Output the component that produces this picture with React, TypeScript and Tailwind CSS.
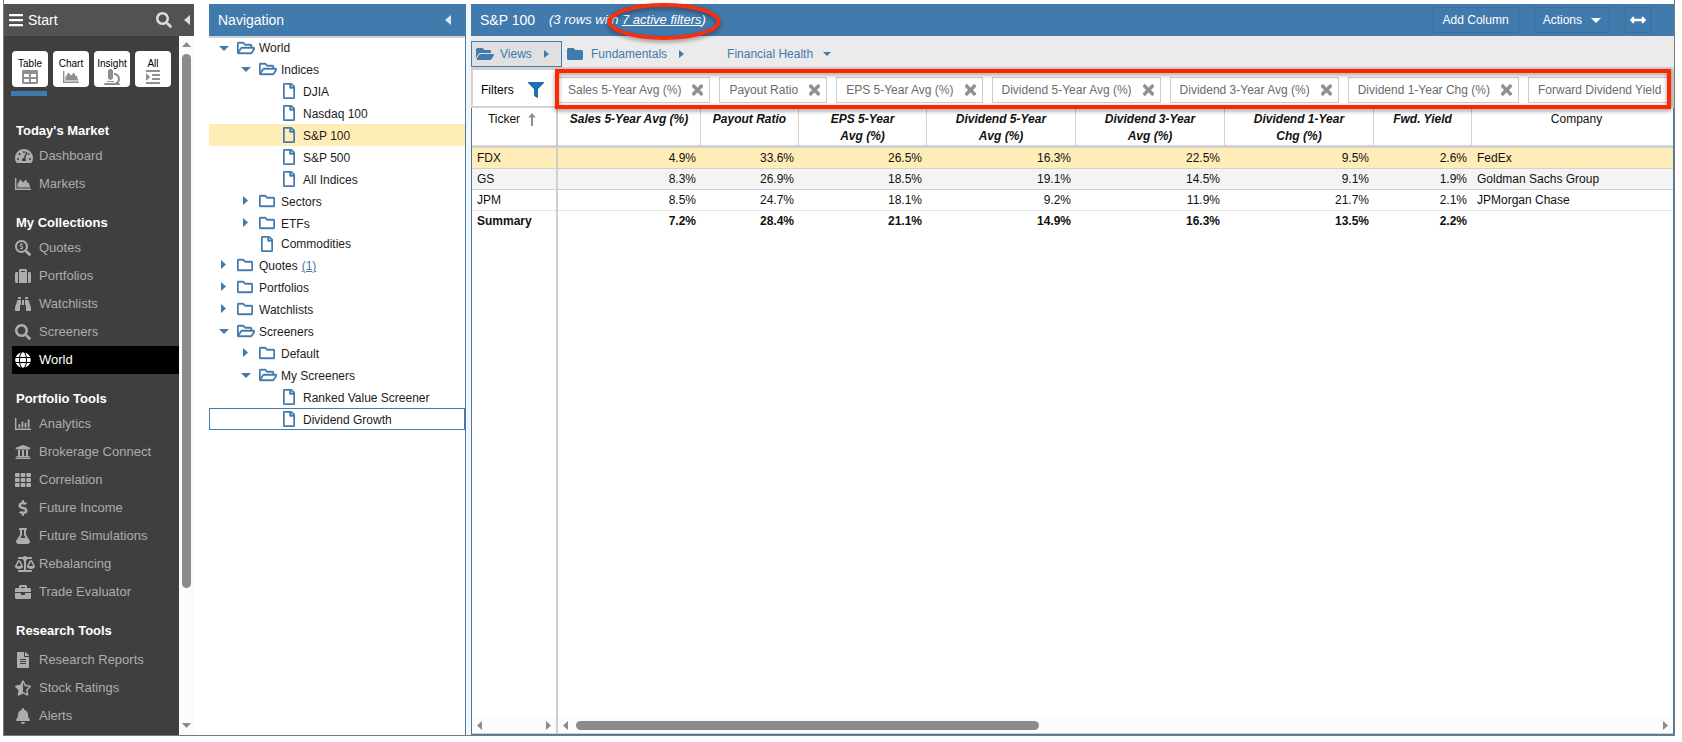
import type { ReactNode } from "react";
import { clsx } from "clsx";
import type { IconType } from "react-icons";
import {
  FaArrowsAltH,
  FaBalanceScale,
  FaBars,
  FaBell,
  FaBinoculars,
  FaBriefcase,
  FaDollarSign,
  FaFileAlt,
  FaFilter,
  FaFlask,
  FaFolder,
  FaFolderOpen,
  FaGlobe,
  FaIndent,
  FaMicroscope,
  FaRegFile,
  FaRegFolder,
  FaRegFolderOpen,
  FaSearch,
  FaSearchDollar,
  FaStarHalfAlt,
  FaSuitcase,
  FaTachometerAlt,
  FaTh,
  FaTimes,
  FaUniversity,
} from "react-icons/fa";

type IconProps = { className?: string };
type AnyIcon = IconType | ((props: IconProps) => ReactNode);

function AreaChartIcon({ className }: IconProps) {
  return (
    <svg viewBox="0 0 16 16" fill="currentColor" className={className}>
      <path d="M0 2h1.4v10.6H16V14H0zM2.4 11.6V8l3-4.4 2.8 2.8 2.8-2.8 1.8 3.6.9-.7 1.6 5.1z" />
    </svg>
  );
}

function BarChartIcon({ className }: IconProps) {
  return (
    <svg viewBox="0 0 16 16" fill="currentColor" className={className}>
      <path d="M0 2h1.4v10.6H16V14H0zM3.4 8.2h1.8v3.3H3.4zM6.5 5.4h1.8v6.1H6.5zM9.6 6.8h1.8v4.7H9.6zM12.7 3.6h1.8v7.9h-1.8z" />
    </svg>
  );
}

function TableIcon({ className }: IconProps) {
  return (
    <svg viewBox="0 0 16 14" className={className}>
      <path
        fill="currentColor"
        fillRule="evenodd"
        d="M1.4 0h13.2A1.4 1.4 0 0 1 16 1.4v11.2a1.4 1.4 0 0 1-1.4 1.4H1.4A1.4 1.4 0 0 1 0 12.6V1.4A1.4 1.4 0 0 1 1.4 0zM2 4v3h5V4zm7 0v3h5V4zM2 9v3h5V9zm7 0v3h5V9z"
      />
    </svg>
  );
}

function SortArrowIcon({ className }: IconProps) {
  return (
    <svg viewBox="0 0 8 14" fill="currentColor" className={className}>
      <path d="M4 0l3.8 4.4H5V13H3V4.4H.2z" />
    </svg>
  );
}

function Triangle({ dir, className }: { dir: "left" | "right" | "down" | "up"; className?: string }) {
  const points = {
    left: "10,0 10,10 0,5",
    right: "0,0 10,5 0,10",
    down: "0,0 10,0 5,10",
    up: "0,10 5,0 10,10",
  }[dir];
  return (
    <svg viewBox="0 0 10 10" preserveAspectRatio="none" fill="currentColor" className={clsx("shrink-0", className)}>
      <polygon points={points} />
    </svg>
  );
}

const tiles: { label: string; icon: AnyIcon }[] = [
  { label: "Table", icon: TableIcon },
  { label: "Chart", icon: AreaChartIcon },
  { label: "Insight", icon: FaMicroscope },
  { label: "All", icon: FaIndent },
];

type MenuItem = { label: string; icon: AnyIcon; size?: string; active?: boolean };

const menu: { title: string; spaced?: boolean; items: MenuItem[] }[] = [
  {
    title: "Today's Market",
    items: [
      { label: "Dashboard", icon: FaTachometerAlt, size: "h-4 w-[18px]" },
      { label: "Markets", icon: AreaChartIcon },
    ],
  },
  {
    title: "My Collections",
    items: [
      { label: "Quotes", icon: FaSearchDollar },
      { label: "Portfolios", icon: FaSuitcase },
      { label: "Watchlists", icon: FaBinoculars },
      { label: "Screeners", icon: FaSearch },
      { label: "World", icon: FaGlobe, active: true },
    ],
  },
  {
    title: "Portfolio Tools",
    items: [
      { label: "Analytics", icon: BarChartIcon },
      { label: "Brokerage Connect", icon: FaUniversity },
      { label: "Correlation", icon: FaTh },
      { label: "Future Income", icon: FaDollarSign },
      { label: "Future Simulations", icon: FaFlask },
      { label: "Rebalancing", icon: FaBalanceScale, size: "h-4 w-5" },
      { label: "Trade Evaluator", icon: FaBriefcase },
    ],
  },
  {
    title: "Research Tools",
    spaced: true,
    items: [
      { label: "Research Reports", icon: FaFileAlt },
      { label: "Stock Ratings", icon: FaStarHalfAlt },
      { label: "Alerts", icon: FaBell },
    ],
  },
];

function Sidebar() {
  return (
    <aside className="flex w-[190px] shrink-0 flex-col bg-[#3f3f3f]">
      <div className="flex h-8 shrink-0 items-center bg-[#525252] pr-1 pl-1 text-white">
        <button type="button" aria-label="Menu">
          <FaBars className="size-4" />
        </button>
        <span className="ml-1 flex-1 text-[14px]">Start</span>
        <button type="button" aria-label="Search">
          <FaSearch className="size-4 text-[#dcdcdc]" />
        </button>
        <button type="button" aria-label="Collapse menu" className="ml-3">
          <Triangle dir="left" className="h-2.5 w-1.5 text-[#dcdcdc]" />
        </button>
      </div>
      <div className="flex min-h-0 flex-1">
        <div className="min-w-0 flex-1 overflow-hidden pt-[15px]">
          <div className="flex gap-[5px] pl-2">
            {tiles.map(({ label, icon: Icon }) => (
              <button
                key={label}
                type="button"
                className="flex h-9 w-9 flex-col items-center rounded bg-white pt-[7px] text-[10px] leading-[11px] text-black"
              >
                {label}
                <Icon className={clsx("shrink-0 text-[#8f8f8f]", label === "Table" ? "mt-px h-3.5 w-4" : "size-4")} />
              </button>
            ))}
          </div>
          <div className="mt-1 mb-[10px] ml-[7px] h-[5px] w-9 bg-[#417aad]" />
          {menu.map((group) => (
            <section key={group.title}>
              <h2 className={clsx("pt-4 pl-3 text-[13px] leading-[17px] font-bold text-white", group.spaced ? "h-10" : "h-9")}>
                {group.title}
              </h2>
              <ul>
                {group.items.map(({ label, icon: Icon, size, active }) => (
                  <li key={label}>
                    <a
                      href="#"
                      className={clsx(
                        "ml-2 flex h-7 items-center pl-[3px] text-[13px]",
                        active ? "bg-black text-white" : "text-[#adadad]"
                      )}
                    >
                      <span className="w-6 shrink-0">
                        <Icon className={clsx("shrink-0", size ?? "size-4")} />
                      </span>
                      {label}
                    </a>
                  </li>
                ))}
              </ul>
            </section>
          ))}
        </div>
        <div className="flex w-[15px] flex-col items-center bg-[#fcfcfc] pt-1.5 pb-[7px] text-[#8b8b8b]">
          <Triangle dir="up" className="h-[5px] w-[9px]" />
          <div className="mt-[7px] w-[9px] flex-[533] rounded-full bg-[#8b8b8b]" />
          <div className="flex-[135]" />
          <Triangle dir="down" className="h-[5px] w-[9px]" />
        </div>
      </div>
    </aside>
  );
}

type TreeRow = {
  label: string;
  level: number;
  kind: "open" | "closed" | "file";
  count?: string;
  selected?: boolean;
  focused?: boolean;
  short?: boolean;
};

const tree: TreeRow[] = [
  { label: "World", level: 0, kind: "open", short: true },
  { label: "Indices", level: 1, kind: "open" },
  { label: "DJIA", level: 2, kind: "file" },
  { label: "Nasdaq 100", level: 2, kind: "file" },
  { label: "S&P 100", level: 2, kind: "file", selected: true },
  { label: "S&P 500", level: 2, kind: "file" },
  { label: "All Indices", level: 2, kind: "file" },
  { label: "Sectors", level: 1, kind: "closed" },
  { label: "ETFs", level: 1, kind: "closed" },
  { label: "Commodities", level: 1, kind: "file", short: true },
  { label: "Quotes", level: 0, kind: "closed", count: "(1)" },
  { label: "Portfolios", level: 0, kind: "closed" },
  { label: "Watchlists", level: 0, kind: "closed" },
  { label: "Screeners", level: 0, kind: "open" },
  { label: "Default", level: 1, kind: "closed" },
  { label: "My Screeners", level: 1, kind: "open" },
  { label: "Ranked Value Screener", level: 2, kind: "file" },
  { label: "Dividend Growth", level: 2, kind: "file", focused: true },
];

const indents = ["pl-[9px]", "pl-[31px]", "pl-[53px]"];

function Navigation() {
  return (
    <nav className="flex w-[257px] shrink-0 flex-col border-r border-[#417aad] bg-white">
      <div className="flex h-8 items-center justify-between bg-[#417aad] pr-3.5 pl-[9px] text-white">
        <h2 className="text-[14px]">Navigation</h2>
        <button type="button" aria-label="Collapse navigation">
          <Triangle dir="left" className="h-2.5 w-1.5 text-[#dde8f2]" />
        </button>
      </div>
      <ul className="border-t-2 border-[#d2d2d2] text-[12px] text-[#1c1c1c]">
        {tree.map((row) => (
          <li
            key={row.label}
            className={clsx(
              "flex items-center border",
              row.short ? "h-5" : "h-[22px]",
              indents[row.level],
              row.selected ? "bg-[#ffedb8]" : "bg-white",
              row.focused ? "border-[#417aad]" : "border-transparent"
            )}
          >
            <span className="flex w-[18px] text-[#417aad]">
              {row.kind === "open" && <Triangle dir="down" className="h-[5px] w-2.5" />}
              {row.kind === "closed" && <Triangle dir="right" className="mb-0.5 ml-0.5 h-[9px] w-[5px]" />}
            </span>
            <span className="flex w-[22px] text-[#417aad]">
              {row.kind === "open" && <FaRegFolderOpen className="size-[18px] stroke-[#417aad] stroke-[14]" />}
              {row.kind === "closed" && <FaRegFolder className="size-4 stroke-[#417aad] stroke-[14]" />}
              {row.kind === "file" && <FaRegFile className="ml-0.5 h-4 w-3 stroke-[#417aad] stroke-[14]" />}
            </span>
            <span className={clsx(!row.short && "pt-0.5")}>
              {row.label}
              {row.count && (
                <a href="#" className="ml-1 text-[#417aad] underline">
                  {row.count}
                </a>
              )}
            </span>
          </li>
        ))}
      </ul>
    </nav>
  );
}

function TitleBar() {
  return (
    <header className="flex h-8 shrink-0 items-center bg-[#417aad] pr-[23px] pl-[9px] text-white">
      <h1 className="text-[14px]">S&amp;P 100</h1>
      <p className="ml-3.5 flex-1 text-[13px] italic">
        (3 rows with{" "}
        <span className="relative">
          <a href="#" className="underline">
            7 active filters
          </a>
          <svg
            viewBox="0 0 116 40"
            fill="none"
            className="pointer-events-none absolute -top-[10px] -left-4 z-10 h-10 w-[116px] max-w-none drop-shadow-[0_2px_2px_rgba(0,0,0,0.4)]"
          >
            <ellipse cx="58" cy="19.5" rx="54.5" ry="16.5" stroke="#f4300e" strokeWidth="4" />
          </svg>
        </span>
        )
      </p>
      <div className="flex gap-[15px] text-[12px]">
        <button type="button" className="h-[26px] border border-[#3a6fa0] px-[9px]">
          Add Column
        </button>
        <button type="button" className="flex h-[26px] items-center gap-[9px] border border-[#3a6fa0] px-2">
          Actions
          <Triangle dir="down" className="h-[5px] w-2.5" />
        </button>
        <button type="button" aria-label="Fit width" className="flex h-[26px] w-[26px] items-center justify-center border border-[#3a6fa0]">
          <FaArrowsAltH className="size-4" />
        </button>
      </div>
    </header>
  );
}

function ViewsBar() {
  return (
    <div className="flex h-[31px] shrink-0 items-end bg-[#ebebeb] text-[12px] text-[#417aad]">
      <button type="button" className="flex h-[26px] w-[91px] items-center border border-[#417aad] bg-[#e0e0e0] pl-1">
        <FaFolderOpen className="mr-1.5 size-[18px]" />
        Views
        <Triangle dir="right" className="ml-3 h-2 w-[5px]" />
      </button>
      <button type="button" className="ml-[5px] flex h-[26px] items-center">
        <FaFolder className="mr-2 size-4" />
        Fundamentals
        <Triangle dir="right" className="ml-3 h-2 w-[5px]" />
      </button>
      <button type="button" className="ml-[43px] flex h-[26px] items-center">
        Financial Health
        <Triangle dir="down" className="ml-2.5 h-1 w-2" />
      </button>
    </div>
  );
}

const filters = [
  "Sales 5-Year Avg (%)",
  "Payout Ratio",
  "EPS 5-Year Avg (%)",
  "Dividend 5-Year Avg (%)",
  "Dividend 3-Year Avg (%)",
  "Dividend 1-Year Chg (%)",
  "Forward Dividend Yield",
];

function FilterBar() {
  return (
    <div className="flex h-[41px] shrink-0 border-t-3 border-r-3 border-b-2 border-[#d2d2d2] bg-white">
      <div className="flex w-[87px] shrink-0 items-center border-x-2 border-[#d2d2d2] pt-1 pl-2 text-[12px] text-black">
        <span>Filters</span>
        <FaFilter className="ml-3.5 size-4 text-[#1f6db3]" />
      </div>
      <div className="relative min-w-0 flex-1">
        <div className="flex h-full items-center gap-[9px] overflow-hidden pt-1">
          {filters.map((name) => (
            <div
              key={name}
              className="flex h-[26px] shrink-0 items-center border border-[#cccccc] pr-1.5 pl-[9px] text-[12px] text-[#6b6b6b]"
            >
              {name}
              <button type="button" aria-label={`Remove ${name}`} className="ml-[11px]">
                <FaTimes className="h-4 w-[11px] stroke-[#8f8f8f] stroke-[24] text-[#8f8f8f]" />
              </button>
            </div>
          ))}
        </div>
        <div className="pointer-events-none absolute -top-px right-0 -bottom-[3px] -left-[3px] z-10 border-4 border-[#ff2600] drop-shadow-[0_2px_2px_rgba(0,0,0,0.4)]" />
      </div>
    </div>
  );
}

const columns = [
  { lines: ["Sales 5-Year Avg (%)"], width: "w-[143px]" },
  { lines: ["Payout Ratio"], width: "w-[98px]" },
  { lines: ["EPS 5-Year", "Avg (%)"], width: "w-[128px]" },
  { lines: ["Dividend 5-Year", "Avg (%)"], width: "w-[149px]" },
  { lines: ["Dividend 3-Year", "Avg (%)"], width: "w-[149px]" },
  { lines: ["Dividend 1-Year", "Chg (%)"], width: "w-[149px]" },
  { lines: ["Fwd. Yield"], width: "w-[98px]" },
];

const rows = [
  { ticker: "FDX", values: ["4.9%", "33.6%", "26.5%", "16.3%", "22.5%", "9.5%", "2.6%"], company: "FedEx" },
  { ticker: "GS", values: ["8.3%", "26.9%", "18.5%", "19.1%", "14.5%", "9.1%", "1.9%"], company: "Goldman Sachs Group" },
  { ticker: "JPM", values: ["8.5%", "24.7%", "18.1%", "9.2%", "11.9%", "21.7%", "2.1%"], company: "JPMorgan Chase" },
];

const summary = ["7.2%", "28.4%", "21.1%", "14.9%", "16.3%", "13.5%", "2.2%"];

const headRow = "h-10 [&>th]:border-b-3 [&>th]:border-[#d2d2d2] [&>th]:pt-[3px] [&>th]:align-top";

const rowStyles = [
  "h-[21px] bg-[#ffedb8] [&>td]:border-b [&>td]:border-[#d2d2d2]",
  "h-[21px] bg-[#f4f4f4] [&>td]:border-b [&>td]:border-[#d2d2d2]",
  "h-[21px] bg-white [&>td]:border-b [&>td]:border-[#e4e4e4]",
];

function DataGrid() {
  return (
    <div className="flex min-h-0 flex-1 border-x border-b border-[#417aad] bg-white text-[12px] leading-[17px] text-[#111]">
      {/* frozen ticker pane */}
      <div className="flex w-[86px] shrink-0 flex-col border-r-2 border-[#cfcfcf]">
        <table className="w-full table-fixed border-separate border-spacing-0">
          <thead>
            <tr className={headRow}>
              <th className="font-normal">
                <span className="flex items-center justify-center gap-2 pr-1">
                  Ticker
                  <SortArrowIcon className="h-3.5 w-2 text-[#8f8f8f]" />
                </span>
              </th>
            </tr>
          </thead>
          <tbody>
            {rows.map((row, i) => (
              <tr key={row.ticker} className={rowStyles[i]}>
                <td className="pl-[5px]">{row.ticker}</td>
              </tr>
            ))}
            <tr className="h-[21px] font-bold">
              <td className="pl-[5px]">Summary</td>
            </tr>
          </tbody>
        </table>
        <div className="mt-auto flex h-[17px] items-center justify-between border-b border-[#d2d2d2] bg-[#fcfcfc] px-[5px] text-[#8b8b8b]">
          <Triangle dir="left" className="h-[9px] w-[5px]" />
          <Triangle dir="right" className="h-[9px] w-[5px]" />
        </div>
      </div>

      <div className="flex min-w-0 flex-1 flex-col overflow-hidden">
        <table className="w-[calc(100%+8px)] table-fixed border-separate border-spacing-0">
          <thead>
            <tr className={headRow}>
              {columns.map((col) => (
                <th key={col.lines.join(" ")} className={clsx("border-r italic", col.width)}>
                  {col.lines.map((line) => (
                    <span key={line} className="block">
                      {line}
                    </span>
                  ))}
                </th>
              ))}
              <th className="font-normal">Company</th>
            </tr>
          </thead>
          <tbody>
            {rows.map((row, i) => (
              <tr key={row.ticker} className={rowStyles[i]}>
                {row.values.map((value, j) => (
                  <td key={j} className="pr-[5px] text-right">
                    {value}
                  </td>
                ))}
                <td className="pl-[5px]">{row.company}</td>
              </tr>
            ))}
            <tr className="h-[21px] font-bold">
              {summary.map((value, j) => (
                <td key={j} className="pr-[5px] text-right">
                  {value}
                </td>
              ))}
              <td />
            </tr>
          </tbody>
        </table>
        <div className="mt-auto flex h-[17px] items-center border-b border-[#d2d2d2] bg-[#fcfcfc] px-[5px] text-[#8b8b8b]">
          <Triangle dir="left" className="mr-2 h-[9px] w-[5px]" />
          <div className="h-[9px] flex-[462] rounded-full bg-[#8b8b8b]" />
          <div className="flex-[622]" />
          <Triangle dir="right" className="h-[9px] w-[5px]" />
        </div>
      </div>
    </div>
  );
}

export default function App() {
  return (
    <div className="h-screen bg-white pr-[7px] pb-1.5 pl-[3px] font-['Liberation_Sans',Arial,sans-serif]">
      <div className="flex h-full overflow-hidden border-r border-b border-l border-[#7b7b7b]">
        <div className="flex min-w-0 flex-1 pt-1">
          <Sidebar />
          <div className="ml-[15px] flex min-w-0 flex-1 bg-[#f5f5f7]">
            <Navigation />
            <main className="ml-[5px] flex min-w-0 flex-1 flex-col">
              <TitleBar />
              <ViewsBar />
              <FilterBar />
              <DataGrid />
            </main>
          </div>
        </div>
      </div>
    </div>
  );
}
